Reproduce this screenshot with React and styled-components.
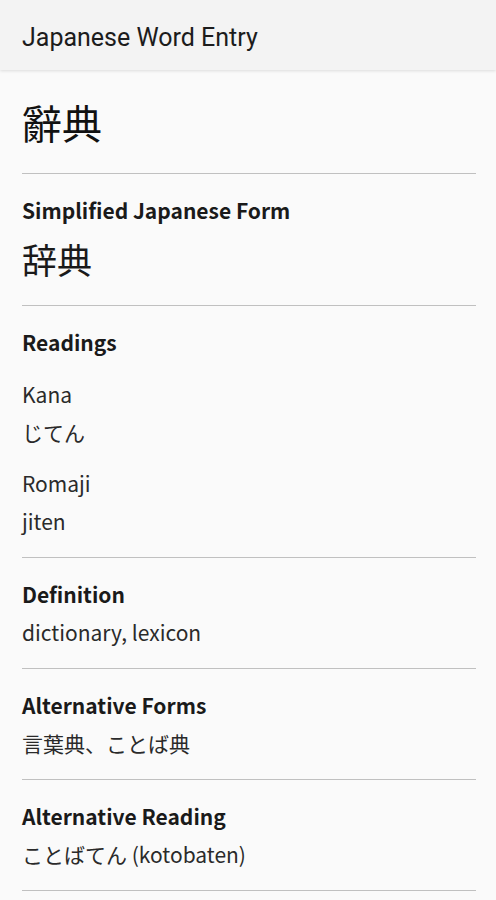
import React from 'react'
import styled, { createGlobalStyle } from 'styled-components'

const GlobalStyle = createGlobalStyle`
    html, body {
        margin: 0;
        padding: 0;
        background: #fafafa;
    }
    body {
        font-family: "Noto Sans CJK JP", "Noto Sans", sans-serif;
        color: #222;
    }
`

const entry = {
    word: '辭典',
    simplified: '辞典',
    readings: [
        { label: 'Kana', value: 'じてん' },
        { label: 'Romaji', value: 'jiten' },
    ],
    sections: [
        { title: 'Definition', value: 'dictionary, lexicon' },
        { title: 'Alternative Forms', value: '言葉典、ことば典' },
        { title: 'Alternative Reading', value: 'ことばてん (kotobaten)' },
    ],
}

export default function App() {
    return (
        <Page>
            <GlobalStyle />
            <AppBar>
                <AppTitle>Japanese Word Entry</AppTitle>
            </AppBar>
            <Content>
                <Section top="24px">
                    <Headword>{entry.word}</Headword>
                </Section>
                <Section>
                    <Heading>Simplified Japanese Form</Heading>
                    <BigValue>{entry.simplified}</BigValue>
                </Section>
                <Section>
                    <Heading>Readings</Heading>
                    <Readings>
                        {entry.readings.map(r => (
                            <Reading key={r.label}>
                                <SubLabel>{r.label}</SubLabel>
                                <Value>{r.value}</Value>
                            </Reading>
                        ))}
                    </Readings>
                </Section>
                {entry.sections.map(s => (
                    <Section key={s.title}>
                        <Heading>{s.title}</Heading>
                        <Value>{s.value}</Value>
                    </Section>
                ))}
            </Content>
        </Page>
    )
}

const Page = styled.div`
    min-height: 900px;
    background: #fafafa;
`

const AppBar = styled.header`
    height: 70px;
    box-sizing: border-box;
    padding: 24px 22px 0;
    background: #f3f3f3;
    box-shadow: 0 1px 3px rgba(0, 0, 0, 0.12);
    position: relative;
    z-index: 1;
`

const AppTitle = styled.h1`
    margin: 0;
    font-family: Roboto, "Liberation Sans", sans-serif;
    font-weight: 400;
    font-size: 25px;
    line-height: 28px;
    color: #1c1c1c;
`

const Content = styled.main`
    padding: 0 20px 0 22px;
`

const Section = styled.section`
    padding: ${props => props.top || '22px'} 0 23px;
    border-bottom: 1px solid #c0c0c0;
    display: flex;
    flex-direction: column;
`

const Headword = styled.div`
    font-size: 40px;
    line-height: 56px;
    color: #111;
`

const Heading = styled.h2`
    margin: 0;
    font-size: 21px;
    font-weight: 700;
    line-height: 28px;
    color: #1a1a1a;
`

const BigValue = styled.div`
    margin-top: 12px;
    font-size: 35px;
    line-height: 46px;
    color: #1a1a1a;
`

const Readings = styled.div`
    margin-top: 25px;
    display: flex;
    flex-direction: column;
    gap: 25px;
`

const Reading = styled.div`
    display: flex;
    flex-direction: column;
`

const SubLabel = styled.div`
    font-size: 21px;
    line-height: 26px;
    color: #2a2a2a;
`

const Value = styled.div`
    margin-top: 11px;
    font-size: 21px;
    line-height: 26px;
    color: #2a2a2a;

    ${Reading} & {
        margin-top: 12px;
    }
`
